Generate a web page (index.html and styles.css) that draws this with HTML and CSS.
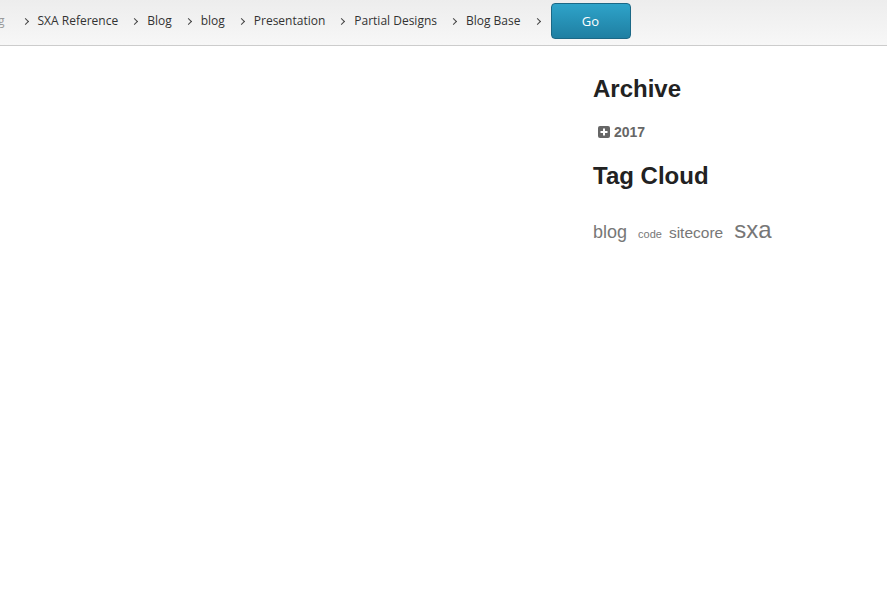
FILE: index.html
```html
<!DOCTYPE html>
<html lang="en">
<head>
    <meta charset="UTF-8">
    <meta name="viewport" content="width=device-width, initial-scale=1.0">
    <title>Blog Base</title>
    <link rel="stylesheet" href="styles.css">
</head>
<body>
    <div class="navbar">
        <ul class="crumbs">
            <li>Blog</li>
            <li>SXA Reference</li>
            <li>Blog</li>
            <li>blog</li>
            <li>Presentation</li>
            <li>Partial Designs</li>
            <li>Blog Base</li>
            <li class="last"></li>
        </ul>
        <button class="go">Go</button>
    </div>

    <div class="page">
        <div class="content"></div>
        <aside class="sidebar">
            <h2>Archive</h2>
            <div class="archive">
                <svg class="plus" width="12" height="12" viewBox="0 0 12 12">
                    <rect x="0" y="0" width="12" height="12" rx="2" fill="#666"/>
                    <rect x="2.5" y="5" width="7" height="2" fill="#fff"/>
                    <rect x="5" y="2.5" width="2" height="7" fill="#fff"/>
                </svg>
                <span>2017</span>
            </div>
            <h2>Tag Cloud</h2>
            <div class="tags">
                <a class="t3">blog</a>
                <a class="t1">code</a>
                <a class="t2">sitecore</a>
                <a class="t4">sxa</a>
            </div>
        </aside>
    </div>
</body>
</html>
```

FILE: styles.css
```css
body {
    margin: 0;
    padding: 0;
    background-color: #fff;
    font-family: Arial, "Liberation Sans", sans-serif;
    color: #222;
}
.navbar {
    height: 45px;
    border-bottom: 1px solid #ccc;
    background: linear-gradient(#ededed, #f7f7f7);
    display: flex;
    align-items: center;
    overflow: hidden;
}
.crumbs {
    list-style: none;
    margin: 0 0 4px -20px;
    padding: 0;
    display: flex;
    align-items: center;
    font-family: "Open Sans", sans-serif;
    font-size: 12px;
    color: #333;
}
.crumbs li {
    white-space: nowrap;
}
.crumbs li + li::before {
    content: "";
    display: inline-block;
    width: 4px;
    height: 4px;
    border-top: 1.2px solid #444;
    border-right: 1.2px solid #444;
    transform: rotate(45deg);
    margin: 0 10px 1px 14px;
}
.crumbs li:first-child {
    color: #999;
    margin-right: 4px;
}
.go {
    margin: 0 0 3px 1px;
    width: 80px;
    height: 36px;
    border: 1px solid #1b6886;
    border-radius: 4px;
    background: linear-gradient(#2ea3c9, #1f7fa2);
    color: #fff;
    font-family: "Open Sans", sans-serif;
    font-size: 13px;
}
.page {
    display: grid;
    grid-template-columns: 1fr 294px;
}
.sidebar {
    padding-top: 29px;
}
.sidebar h2 {
    margin: 0 0 21px 0;
    font-size: 24px;
    font-weight: bold;
    color: #222;
}
.archive {
    display: flex;
    align-items: center;
    gap: 4px;
    margin: 0 0 22px 5px;
    font-size: 14px;
    font-weight: bold;
    color: #666;
}
.tags {
    display: flex;
    align-items: baseline;
    margin-top: 26px;
    color: #777;
}
.t1 { font-size: 11px; margin-right: 7px; }
.t2 { font-size: 15.5px; margin-right: 11px; }
.t3 { font-size: 18px; margin-right: 11px; }
.t4 { font-size: 24px; }
```
